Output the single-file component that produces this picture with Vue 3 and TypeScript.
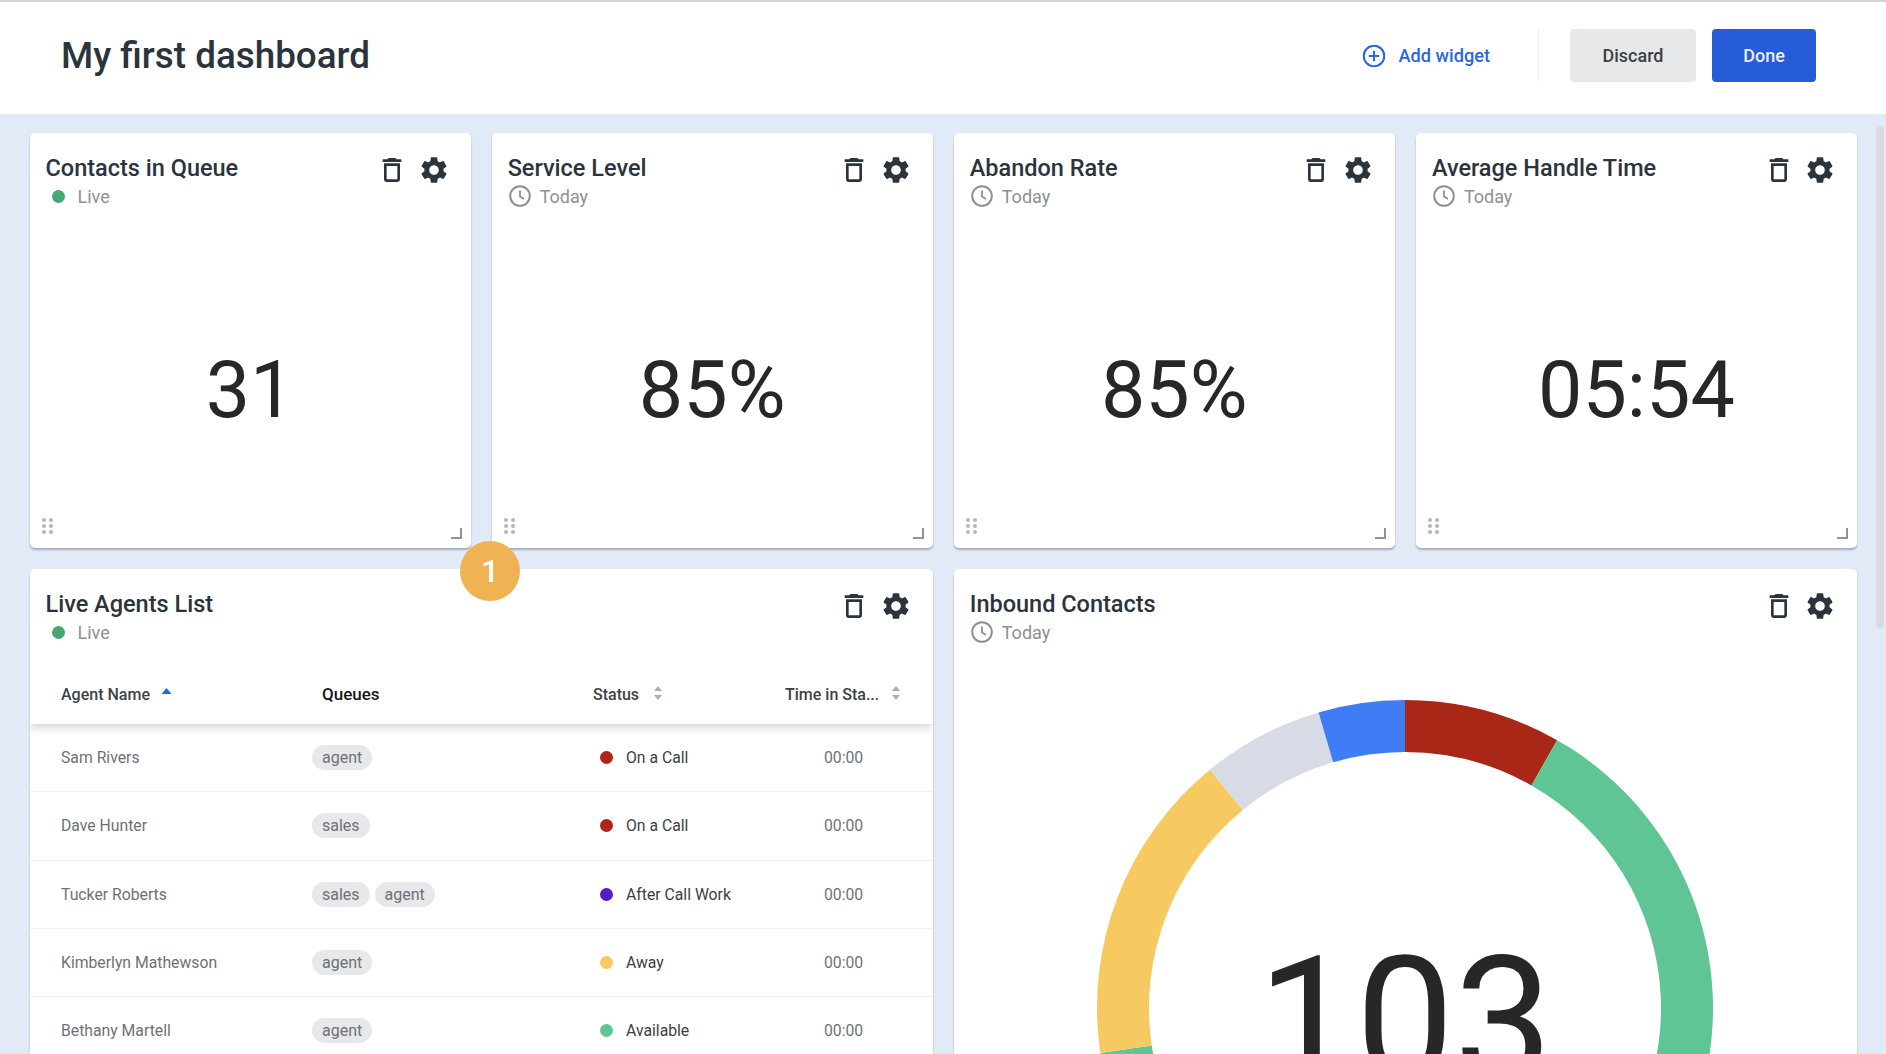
<script setup lang="ts">
interface Metric { title: string; live: boolean; value: string }
interface Agent { name: string; queues: string[]; status: string; color: string }
interface Segment { color: string; from: number; to: number }

const metrics: Metric[] = [
  { title: 'Contacts in Queue', live: true, value: '31' },
  { title: 'Service Level', live: false, value: '85%' },
  { title: 'Abandon Rate', live: false, value: '85%' },
  { title: 'Average Handle Time', live: false, value: '05:54' },
]

const agents: Agent[] = [
  { name: 'Sam Rivers', queues: ['agent'], status: 'On a Call', color: '#ad2618' },
  { name: 'Dave Hunter', queues: ['sales'], status: 'On a Call', color: '#ad2618' },
  { name: 'Tucker Roberts', queues: ['sales', 'agent'], status: 'After Call Work', color: '#4f1fc8' },
  { name: 'Kimberlyn Mathewson', queues: ['agent'], status: 'Away', color: '#f7c95f' },
  { name: 'Bethany Martell', queues: ['agent'], status: 'Available', color: '#5fc595' },
]

const segments: Segment[] = [
  { color: '#a92716', from: 0, to: 29.6 },
  { color: '#5fc595', from: 29.6, to: 261.6 },
  { color: '#f6ca60', from: 261.6, to: 320.7 },
  { color: '#d6dbe6', from: 320.7, to: 343.7 },
  { color: '#3f7cf6', from: 343.7, to: 360 },
]

function point(r: number, deg: number): string {
  const a = (deg * Math.PI) / 180
  return `${(308 + r * Math.sin(a)).toFixed(2)} ${(308 - r * Math.cos(a)).toFixed(2)}`
}

function arc(s: Segment): string {
  const R = 308
  const r = 256
  const large = s.to - s.from > 180 ? 1 : 0
  return `M${point(R, s.from)}A${R} ${R} 0 ${large} 1 ${point(R, s.to)}L${point(r, s.to)}A${r} ${r} 0 ${large} 0 ${point(r, s.from)}Z`
}

const trash = 'M6 19c0 1.1.9 2 2 2h8c1.1 0 2-.9 2-2V7H6v12zM8 9h8v10H8V9zm7.5-5l-1-1h-5l-1 1H5v2h14V4h-3.5z'
const gear = 'M19.14 12.94c.04-.3.06-.61.06-.94 0-.32-.02-.64-.07-.94l2.03-1.58a.49.49 0 0 0 .12-.61l-1.92-3.32a.488.488 0 0 0-.59-.22l-2.39.96c-.5-.38-1.03-.7-1.62-.94l-.36-2.54a.484.484 0 0 0-.48-.41h-3.84c-.24 0-.43.17-.47.41l-.36 2.54c-.59.24-1.13.57-1.62.94l-2.39-.96c-.22-.08-.47 0-.59.22L2.74 8.87c-.12.21-.08.47.12.61l2.03 1.58c-.05.3-.09.63-.09.94s.02.64.07.94l-2.03 1.58a.49.49 0 0 0-.12.61l1.92 3.32c.12.22.37.29.59.22l2.39-.96c.5.38 1.03.7 1.62.94l.36 2.54c.05.24.24.41.48.41h3.84c.24 0 .44-.17.47-.41l.36-2.54c.59-.24 1.13-.56 1.62-.94l2.39.96c.22.08.47 0 .59-.22l1.92-3.32c.12-.22.07-.47-.12-.61l-2.01-1.58zM12 15.6c-1.98 0-3.6-1.62-3.6-3.6s1.62-3.6 3.6-3.6 3.6 1.62 3.6 3.6-1.62 3.6-3.6 3.6z'
const dots: [number, number][] = [[2, 2], [9, 2], [2, 8], [9, 8], [2, 14], [9, 14]]
</script>

<template>
  <div class="page">
    <header class="topbar">
      <h1 class="page-title">My first dashboard</h1>
      <div class="top-actions">
        <button class="add-widget">
          <svg class="plus" viewBox="0 0 22 22" width="22" height="22">
            <circle cx="11" cy="11" r="9.8" fill="none" stroke="#2a66e0" stroke-width="2" />
            <path d="M11 6v10M6 11h10" stroke="#2a66e0" stroke-width="2" />
          </svg>
          Add widget
        </button>
        <span class="divider"></span>
        <button class="btn discard">Discard</button>
        <button class="btn done">Done</button>
      </div>
    </header>

    <main class="board">
      <section v-for="m in metrics" :key="m.title" class="card metric">
        <div class="card-head">
          <div>
            <div class="card-title">{{ m.title }}</div>
            <div class="card-sub">
              <template v-if="m.live"><i class="live-dot"></i><span class="live-label">Live</span></template>
              <template v-else>
                <svg class="clock" viewBox="0 0 22 22" width="22" height="22">
                  <circle cx="11" cy="11" r="9.8" fill="none" stroke="#8d9095" stroke-width="2" />
                  <path d="M11 5.5V11.4l4 2.6" fill="none" stroke="#8d9095" stroke-width="1.8" />
                </svg>
                <span>Today</span>
              </template>
            </div>
          </div>
          <div class="card-actions">
            <svg viewBox="0 0 24 24" width="32" height="32"><path :d="trash" fill="#2b333d" /></svg>
            <svg viewBox="0 0 24 24" width="32" height="32"><path :d="gear" fill="#2b333d" /></svg>
          </div>
        </div>
        <div class="metric-value">{{ m.value }}</div>
        <svg class="drag" viewBox="0 0 11 16" width="11" height="16">
          <circle v-for="(d, i) in dots" :key="i" :cx="d[0]" :cy="d[1]" r="2" fill="#b4b6b9" />
        </svg>
        <svg class="resize" viewBox="0 0 11 11" width="11" height="11">
          <path d="M0 10h10V0" fill="none" stroke="#8f9296" stroke-width="2" />
        </svg>
      </section>

      <section class="card agents">
        <div class="card-head">
          <div>
            <div class="card-title">Live Agents List</div>
            <div class="card-sub"><i class="live-dot"></i><span class="live-label">Live</span></div>
          </div>
          <div class="card-actions">
            <svg viewBox="0 0 24 24" width="32" height="32"><path :d="trash" fill="#2b333d" /></svg>
            <svg viewBox="0 0 24 24" width="32" height="32"><path :d="gear" fill="#2b333d" /></svg>
          </div>
        </div>
        <div class="table-row table-header">
          <div class="th">Agent Name
            <svg class="sort-one" viewBox="0 0 10 6" width="11" height="6"><path d="M5 0l5 6H0z" fill="#2a66e0" /></svg>
          </div>
          <div class="th th-queues">Queues</div>
          <div class="th">Status
            <svg class="sort" viewBox="0 0 10 14" width="10" height="14"><path d="M5 0l4 5H1zM5 14L1 9h8z" fill="#a9afb9" /></svg>
          </div>
          <div class="th">Time in Sta...
            <svg class="sort sort-time" viewBox="0 0 10 14" width="10" height="14"><path d="M5 0l4 5H1zM5 14L1 9h8z" fill="#a9afb9" /></svg>
          </div>
        </div>
        <div v-for="a in agents" :key="a.name" class="table-row agent-row">
          <div class="agent-name">{{ a.name }}</div>
          <div class="chips"><span v-for="q in a.queues" :key="q" class="chip">{{ q }}</span></div>
          <div class="status"><i class="status-dot" :style="{ background: a.color }"></i>{{ a.status }}</div>
          <div class="time">00:00</div>
        </div>
      </section>

      <section class="card inbound">
        <div class="card-head">
          <div>
            <div class="card-title">Inbound Contacts</div>
            <div class="card-sub">
              <svg class="clock" viewBox="0 0 22 22" width="22" height="22">
                <circle cx="11" cy="11" r="9.8" fill="none" stroke="#8d9095" stroke-width="2" />
                <path d="M11 5.5V11.4l4 2.6" fill="none" stroke="#8d9095" stroke-width="1.8" />
              </svg>
              <span>Today</span>
            </div>
          </div>
          <div class="card-actions">
            <svg viewBox="0 0 24 24" width="32" height="32"><path :d="trash" fill="#2b333d" /></svg>
            <svg viewBox="0 0 24 24" width="32" height="32"><path :d="gear" fill="#2b333d" /></svg>
          </div>
        </div>
        <svg class="donut" viewBox="0 0 616 616" width="616" height="616">
          <path v-for="s in segments" :key="s.color" :d="arc(s)" :fill="s.color" />
          <text x="308" y="380" text-anchor="middle" class="donut-value">103</text>
        </svg>
      </section>

      <div class="badge">1</div>
    </main>
    <div class="scroll-thumb"></div>
  </div>
</template>

<style scoped>
.page {
  position: relative;
  width: 1886px;
  height: 1054px;
  overflow: hidden;
  display: flex;
  flex-direction: column;
  background: #e2eaf7;
  font-family: Roboto, "Liberation Sans", sans-serif;
  color: #2b333d;
}
.topbar {
  flex: none;
  height: 114px;
  box-sizing: border-box;
  background: #fff;
  border-top: 2px solid #d4d5d7;
  padding: 0 70px 6px 61px;
  display: flex;
  align-items: center;
  justify-content: space-between;
}
.page-title {
  margin: 0;
  font-size: 36.8px;
  font-weight: 500;
  color: #2b333d;
}
.top-actions {
  display: flex;
  align-items: center;
}
.add-widget {
  display: flex;
  align-items: center;
  gap: 13px;
  padding: 0;
  margin-top: 1px;
  border: 0;
  background: none;
  font: 500 18.2px Roboto, sans-serif;
  color: #2a66e0;
}
.plus {
  transform: scale(1.05);
}
.divider {
  width: 1px;
  height: 53px;
  background: #eceeef;
  margin: 0 31px 0 48px;
}
.btn {
  height: 53px;
  border: 0;
  border-radius: 4px;
  font: 500 18px Roboto, sans-serif;
}
.discard {
  width: 126px;
  background: #e7e8ea;
  color: #3b3f44;
}
.done {
  width: 104px;
  margin-left: 16px;
  background: #275cd8;
  color: #e9effb;
}
.board {
  position: relative;
  flex: 1;
  min-height: 0;
  box-sizing: border-box;
  padding: 19px 29px 0 29.5px;
  display: grid;
  grid-template-columns: repeat(4, 1fr);
  grid-template-rows: 415px 700px;
  gap: 21px 21px;
}
.card {
  position: relative;
  background: #fff;
  border-radius: 5px;
  box-shadow: 0 2px 2px rgba(70, 80, 95, 0.4);
  overflow: hidden;
}
.metric {
  display: flex;
  flex-direction: column;
}
.agents, .inbound {
  grid-column: span 2;
}
.card-head {
  flex: none;
  display: flex;
  justify-content: space-between;
  padding: 21px 21px 0 16px;
  height: 75px;
  box-sizing: border-box;
}
.card-title {
  font-size: 23.5px;
  font-weight: 500;
  line-height: 28px;
  color: #2b333d;
}
.card-sub {
  display: flex;
  align-items: center;
  height: 22px;
  margin-top: 3px;
  font-size: 18px;
  color: #8d9095;
}
.live-dot {
  width: 13px;
  height: 13px;
  margin-left: 6px;
  border-radius: 50%;
  background: #46a872;
}
.live-label {
  margin-left: 13px;
}
.clock {
  margin: 0 9px 0 1px;
}
.card-actions {
  display: flex;
  gap: 9.5px;
  height: 32px;
}
.metric-value {
  flex: 1;
  display: flex;
  align-items: center;
  justify-content: center;
  padding-top: 23px;
  font-size: 79px;
  color: #272727;
}
.drag {
  position: absolute;
  left: 12px;
  bottom: 14px;
}
.resize {
  position: absolute;
  right: 9px;
  bottom: 9px;
}
.table-row {
  display: grid;
  grid-template-columns: 251px 281px 192px 1fr;
  padding-left: 31.5px;
  align-items: center;
}
.table-header {
  position: relative;
  height: 81px;
  margin-top: -1px;
  padding-top: 21px;
  box-sizing: border-box;
  box-shadow: 0 4px 8px rgba(70, 80, 95, 0.22);
  clip-path: inset(0 0 -20px 0);
  font-size: 16px;
  font-weight: 500;
  color: #3c424a;
}
.th {
  display: flex;
  align-items: center;
}
.th-queues {
  padding-left: 10px;
  font-size: 17px;
  color: #15171a;
}
.sort-one {
  margin: -6px 0 0 11px;
}
.sort {
  margin: -2px 0 0 14px;
}
.sort-time {
  margin-left: 12px;
}
.agent-row {
  height: 68.3px;
  box-sizing: border-box;
  border-bottom: 1px solid #eef0f2;
  font-size: 15.75px;
}
.agent-name {
  color: #6d7177;
}
.chips {
  display: flex;
  gap: 5px;
}
.chip {
  height: 25px;
  line-height: 25px;
  padding: 0 10px;
  border-radius: 13px;
  background: #e7e8ea;
  color: #6d7177;
  font-size: 16px;
}
.status {
  display: flex;
  align-items: center;
  padding-left: 7px;
  color: #3c4046;
}
.status-dot {
  width: 13px;
  height: 13px;
  border-radius: 50%;
  margin-right: 13px;
}
.time {
  padding-left: 39px;
  color: #6f7276;
}
.donut {
  display: block;
  margin: 56px auto 0;
}
.donut-value {
  font-family: Roboto, sans-serif;
  font-size: 175px;
  fill: #272727;
}
.badge {
  position: absolute;
  left: 460px;
  top: 427px;
  width: 60px;
  height: 60px;
  border-radius: 50%;
  background: #f0b252;
  color: #fff;
  font-size: 32px;
  font-weight: 500;
  display: flex;
  align-items: center;
  justify-content: center;
}
.scroll-thumb {
  position: absolute;
  right: 2px;
  top: 126px;
  width: 8px;
  height: 502px;
  border-radius: 4px;
  background: #d8dbdf;
}
</style>

<style>
html, body { margin: 0; background: #e2eaf7; overflow: hidden; }
</style>
